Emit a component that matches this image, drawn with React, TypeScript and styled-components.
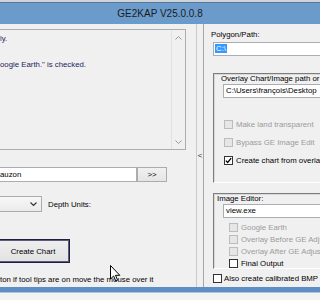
import styled, { createGlobalStyle } from "styled-components";

const Global = createGlobalStyle`
  html, body {
    margin: 0;
    padding: 0;
  }
  body {
    font-family: "Liberation Sans", Arial, sans-serif;
  }
`;

const Window = styled.div`
  position: relative;
  width: 320px;
  height: 300px;
  overflow: hidden;
  background: #f0f0f0;
  display: flex;
  flex-direction: column;
  font-size: 7.8px;
  color: #000;
`;

const TopStrip = styled.div`
  height: 3px;
  flex: none;
  background: #cfd2d6;
  border-bottom: 1px solid #55779c;
  box-sizing: border-box;
`;

const TitleBar = styled.div`
  height: 21px;
  flex: none;
  background: #6b9bcb;
  display: flex;
  align-items: center;
  justify-content: center;
  font-size: 10px;
  color: #1b1b1b;
`;

const Body = styled.div`
  flex: 1;
  display: flex;
  min-height: 0;
`;

const LeftPanel = styled.div`
  width: 196px;
  flex: none;
  display: flex;
  flex-direction: column;
`;

const LogBox = styled.div`
  margin-top: 5px;
  width: 186px;
  height: 121px;
  box-sizing: border-box;
  border: 1px solid #abadb3;
  border-left: none;
  display: flex;
  background: #f0f0f0;
`;

const LogText = styled.div`
  flex: 1;
  padding-top: 2px;
  line-height: 13px;
  color: #1d1d5e;
  white-space: pre;
`;

const ScrollBar = styled.div`
  width: 13px;
  border-left: 1px solid #e2e2e2;
  display: flex;
  flex-direction: column;
  justify-content: space-between;
  align-items: center;
  padding: 6px 0 5px;
`;

const PathRow = styled.div`
  margin-top: 17px;
  display: flex;
  height: 15px;
`;

const TextInput = styled.div<{ $width: number }>`
  width: ${({ $width }) => $width}px;
  height: 100%;
  box-sizing: border-box;
  border: 1px solid #abadb3;
  background: #fff;
  line-height: 13px;
  padding-left: 2px;
  white-space: nowrap;
  overflow: hidden;
`;

const LeftInput = styled(TextInput)`
  border-left: none;
  padding-left: 0;
`;

const SmallButton = styled.div`
  width: 30px;
  box-sizing: border-box;
  border: 1px solid #acacac;
  background: linear-gradient(#f0f0f0, #e5e5e5);
  display: flex;
  align-items: center;
  justify-content: center;
`;

const ComboRow = styled.div`
  margin-top: 14px;
  height: 16px;
  display: flex;
  align-items: center;
  gap: 6px;
`;

const Combo = styled.div`
  width: 42px;
  height: 16px;
  box-sizing: border-box;
  border: 1px solid #acacac;
  border-left: none;
  background: linear-gradient(#f7f7f7, #ebebeb);
  display: flex;
  align-items: center;
  justify-content: flex-end;
  padding-right: 4px;
`;

const CreateButton = styled.div`
  margin-top: 27px;
  margin-left: -4px;
  width: 74px;
  height: 24px;
  box-sizing: border-box;
  border: 1px solid #1f1f3f;
  box-shadow: inset 0 0 0 1px #5c5c7c;
  background: linear-gradient(#efefef, #e2e2e2);
  display: flex;
  align-items: center;
  justify-content: center;
`;

const Hint = styled.div`
  margin-top: 11px;
  line-height: 12px;
  white-space: nowrap;
`;

const Splitter = styled.div`
  width: 8px;
  flex: none;
  box-sizing: border-box;
  border-left: 1px solid #c9c9c9;
  border-right: 1px solid #a6a6a6;
  display: flex;
  align-items: center;
  justify-content: center;
  font-size: 8px;
  color: #333;
`;

const RightPanel = styled.div`
  flex: 1;
  min-width: 0;
  display: flex;
  flex-direction: column;
  padding-left: 7px;
  overflow: hidden;
`;

const FieldLabel = styled.div`
  margin-top: 5px;
  line-height: 12px;
  white-space: nowrap;
`;

const PolygonInput = styled(TextInput)`
  margin: 1px 0 0 2px;
  height: 14px;
  flex: none;
  padding-left: 1px;
  line-height: 12px;
`;

const Selected = styled.span`
  background: #3399ff;
  color: #fff;
  padding: 0 1px;
`;

const Group = styled.div<{ $top: number; $height: number }>`
  margin: ${({ $top }) => $top}px 0 0 2px;
  width: 200px;
  height: ${({ $height }) => $height}px;
  flex: none;
  box-sizing: border-box;
  border: 1px solid #7d7d7d;
  border-right-color: #fff;
  border-bottom-color: #fff;
  box-shadow: inset 1px 1px 0 #d8d8d8;
  display: flex;
  flex-direction: column;
`;

const GroupLabel = styled.div<{ $left: number }>`
  margin-left: ${({ $left }) => $left}px;
  line-height: 10px;
  white-space: nowrap;
`;

const GroupInput = styled(TextInput)`
  margin-left: 9px;
  height: 14px;
  flex: none;
  line-height: 12px;
`;

const CheckList = styled.div<{ $top: number; $gap: number; $left: number }>`
  margin: ${({ $top }) => $top}px 0 0 ${({ $left }) => $left}px;
  display: flex;
  flex-direction: column;
  gap: ${({ $gap }) => $gap}px;
`;

const CheckRow = styled.div<{ $disabled?: boolean }>`
  height: 12px;
  display: flex;
  align-items: center;
  gap: 3px;
  white-space: nowrap;
  color: ${({ $disabled }) => ($disabled ? "#9b9b9b" : "#000")};
`;

const Box = styled.span<{ $disabled?: boolean }>`
  width: 9px;
  height: 9px;
  flex: none;
  box-sizing: border-box;
  border: 1px solid ${({ $disabled }) => ($disabled ? "#bcbcbc" : "#333")};
  background: ${({ $disabled }) => ($disabled ? "#e6e6e6" : "#fff")};
  display: flex;
  align-items: center;
  justify-content: center;
`;

const BmpRow = styled(CheckRow)`
  margin: 3px 0 0 2px;
  gap: 2px;
`;

const BottomEdge = styled.div`
  height: 13px;
  flex: none;
  background: linear-gradient(#5d8ec4 0, #5d8ec4 5px, #a9c4e4 5px, #a9c4e4 6px, #f3f3f3 6px);
`;

const Cursor = styled.svg`
  position: absolute;
  left: 110px;
  top: 265px;
`;

const Chevron = ({ up }: { up?: boolean }) => (
  <svg width="7" height="4" viewBox="0 0 7 4">
    <path d={up ? "M0.5 3.5 L3.5 0.5 L6.5 3.5" : "M0.5 0.5 L3.5 3.5 L6.5 0.5"} fill="none" stroke="#9a9a9a" strokeWidth="1" />
  </svg>
);

const Check = ({ label, checked, disabled }: { label: string; checked?: boolean; disabled?: boolean }) => (
  <CheckRow $disabled={disabled}>
    <Box $disabled={disabled}>
      {checked && (
        <svg width="7" height="7" viewBox="0 0 7 7">
          <path d="M0.8 3.6 L2.7 5.5 L6.2 1.2" fill="none" stroke="#000" strokeWidth="1.3" />
        </svg>
      )}
    </Box>
    {label}
  </CheckRow>
);

export default function App() {
  return (
    <>
      <Global />
      <Window>
        <TopStrip />
        <TitleBar>GE2KAP V25.0.0.8</TitleBar>
        <Body>
          <LeftPanel>
            <LogBox>
              <LogText>{"ly.\n\noogle Earth.\" is checked."}</LogText>
              <ScrollBar>
                <Chevron up />
                <Chevron />
              </ScrollBar>
            </LogBox>
            <PathRow>
              <LeftInput $width={137}>auzon</LeftInput>
              <SmallButton>&gt;&gt;</SmallButton>
            </PathRow>
            <ComboRow>
              <Combo>
                <svg width="7" height="4" viewBox="0 0 7 4">
                  <path d="M0.5 0.5 L3.5 3.5 L6.5 0.5" fill="none" stroke="#333" strokeWidth="1.1" />
                </svg>
              </Combo>
              Depth Units:
            </ComboRow>
            <CreateButton>Create Chart</CreateButton>
            <Hint>ton if tool tips are on move the mouse over it</Hint>
          </LeftPanel>
          <Splitter>&lt;</Splitter>
          <RightPanel>
            <FieldLabel>Polygon/Path:</FieldLabel>
            <PolygonInput $width={200}>
              <Selected>C:\</Selected>
            </PolygonInput>
            <Group $top={17} $height={110}>
              <GroupLabel $left={7}>Overlay Chart/Image path or</GroupLabel>
              <GroupInput $width={200}>C:\Users\françois\Desktop</GroupInput>
              <CheckList $top={20} $gap={6} $left={10}>
                <Check label="Make land transparent" disabled />
                <Check label="Bypass GE Image Edit" disabled />
                <Check label="Create chart from overlay" checked />
              </CheckList>
            </Group>
            <Group $top={10} $height={76}>
              <GroupLabel $left={3}>Image Editor:</GroupLabel>
              <GroupInput $width={200}>view.exe</GroupInput>
              <CheckList $top={3} $gap={0} $left={15}>
                <Check label="Google Earth" disabled />
                <Check label="Overlay Before GE Adjustments" disabled />
                <Check label="Overlay After GE Adjustments" disabled />
                <Check label="Final Output" />
              </CheckList>
            </Group>
            <BmpRow>
              <Box />
              Also create calibrated BMP
            </BmpRow>
          </RightPanel>
        </Body>
        <BottomEdge />
        <Cursor width="11" height="17" viewBox="0 0 11 17">
          <path d="M0.5 0.5 L0.5 14 L3.6 11 L5.8 16 L7.6 15.2 L5.5 10.3 L9.8 10.3 Z" fill="#fff" stroke="#000" strokeWidth="1" />
        </Cursor>
      </Window>
    </>
  );
}
